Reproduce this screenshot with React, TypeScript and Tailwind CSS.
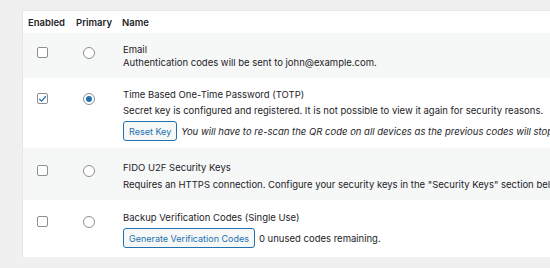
import React from "react";

const Checkbox = ({ checked = false }: { checked?: boolean }) => (
  <div className="w-[11px] h-[11px] rounded-[2px] border border-[#8c8f94] bg-white flex items-center justify-center">
    {checked && (
      <svg width="10" height="10" viewBox="0 0 10 10">
        <path d="M1.8 5.2 L4 7.4 L8.4 2.2" fill="none" stroke="#2271b1" strokeWidth="1.4" strokeLinecap="round" strokeLinejoin="round" />
      </svg>
    )}
  </div>
);

const Radio = ({ checked = false }: { checked?: boolean }) => (
  <div className="w-[12px] h-[12px] rounded-full border border-[#8c8f94] bg-white flex items-center justify-center">
    {checked && <div className="w-[6px] h-[6px] rounded-full bg-[#2271b1]" />}
  </div>
);

const Button = ({ children }: { children: React.ReactNode }) => (
  <div className="h-[20px] px-[5px] flex items-center rounded-[3px] border border-[#2271b1] bg-[#f6f7f7] text-[#2271b1] text-[9px] leading-none">
    {children}
  </div>
);

function Row({
  bg,
  pt,
  cpt,
  pb,
  checked,
  children,
}: {
  bg: string;
  pt: string;
  cpt: string;
  pb: string;
  checked?: boolean;
  children: React.ReactNode;
}) {
  return (
    <div className={`flex ${bg} ${pb}`}>
      <div className={`w-[53px] shrink-0 pl-[14px] ${cpt}`}>
        <Checkbox checked={checked} />
      </div>
      <div className={`w-[46px] shrink-0 pl-[7px] ${cpt}`}>
        <Radio checked={checked} />
      </div>
      <div className={`flex-1 min-w-0 pl-[1px] ${pt}`}>{children}</div>
    </div>
  );
}

export default function App() {
  return (
    <div
      className="w-[550px] h-[268px] overflow-hidden bg-[#f0f0f1] pt-[10px] pl-[22px] text-[#1d2327] text-[9.5px] leading-[13px] whitespace-nowrap"
      style={{ fontFamily: 'Inter, "Liberation Sans", Arial, sans-serif' }}
    >
      <div className="w-[560px] h-[246px] bg-white border-l border-t border-b border-[#e6e6e8]">
        <div className="flex h-[22px] items-center font-semibold">
          <div className="w-[53px] shrink-0 pl-[5px]">Enabled</div>
          <div className="w-[46px] shrink-0">Primary</div>
          <div className="pl-[0px]">Name</div>
        </div>

        <Row bg="bg-[#f6f7f7]" pt="pt-[10px]" cpt="pt-[14px]" pb="pb-[9px]">
          <div>Email</div>
          <div>Authentication codes will be sent to john@example.com.</div>
        </Row>

        <Row bg="bg-white" pt="pt-[10px]" cpt="pt-[15px]" pb="pb-[7px]" checked>
          <div>Time Based One-Time Password (TOTP)</div>
          <div className="mt-[3px]">
            Secret key is configured and registered. It is not possible to view it again for security reasons.
          </div>
          <div className="mt-[4px] flex items-center gap-[4px]">
            <Button>Reset Key</Button>
            <span className="italic">
              You will have to re-scan the QR code on all devices as the previous codes will stop working.
            </span>
          </div>
        </Row>

        <Row bg="bg-[#f6f7f7]" pt="pt-[13px]" cpt="pt-[17px]" pb="pb-[9px]">
          <div>FIDO U2F Security Keys</div>
          <div className="mt-[4px]">
            Requires an HTTPS connection. Configure your security keys in the "Security Keys" section below.
          </div>
        </Row>

        <Row bg="bg-white" pt="pt-[11px]" cpt="pt-[16px]" pb="pb-[9px]">
          <div>Backup Verification Codes (Single Use)</div>
          <div className="mt-[4px] flex items-center gap-[4px]">
            <Button>Generate Verification Codes</Button>
            <span>0 unused codes remaining.</span>
          </div>
        </Row>
      </div>
    </div>
  );
}
